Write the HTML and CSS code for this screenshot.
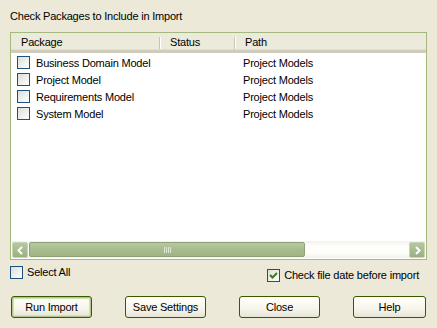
FILE: index.html
```html
<!DOCTYPE html>
<html lang="en">
<head>
    <meta charset="UTF-8">
    <title>Import Packages</title>
    <link rel="stylesheet" href="styles.css">
</head>
<body>
    <div class="dialog">
        <div class="title">Check Packages to Include in Import</div>
        <div class="listbox">
            <div class="list-header">
                <div class="col col-package">Package</div>
                <div class="col col-status">Status</div>
                <div class="col col-path">Path</div>
            </div>
            <div class="list-rows">
                <div class="row">
                    <div class="cell cell-package"><span class="check"></span>Business Domain Model</div>
                    <div class="cell cell-status"></div>
                    <div class="cell cell-path">Project Models</div>
                </div>
                <div class="row">
                    <div class="cell cell-package"><span class="check"></span>Project Model</div>
                    <div class="cell cell-status"></div>
                    <div class="cell cell-path">Project Models</div>
                </div>
                <div class="row">
                    <div class="cell cell-package"><span class="check"></span>Requirements Model</div>
                    <div class="cell cell-status"></div>
                    <div class="cell cell-path">Project Models</div>
                </div>
                <div class="row">
                    <div class="cell cell-package"><span class="check"></span>System Model</div>
                    <div class="cell cell-status"></div>
                    <div class="cell cell-path">Project Models</div>
                </div>
            </div>
            <div class="hscroll">
                <div class="scroll-btn">
                    <svg width="9" height="9" viewBox="0 0 9 9"><path d="M6 1 L2.5 4.5 L6 8" fill="none" stroke="#fff" stroke-width="2"/></svg>
                </div>
                <div class="scroll-thumb"><span class="grip"></span></div>
                <div class="scroll-track"></div>
                <div class="scroll-btn">
                    <svg width="9" height="9" viewBox="0 0 9 9"><path d="M3 1 L6.5 4.5 L3 8" fill="none" stroke="#fff" stroke-width="2"/></svg>
                </div>
            </div>
        </div>
        <div class="options">
            <label class="option"><span class="check"></span>Select All</label>
            <label class="option option-right"><span class="check checked">
                <svg width="9" height="9" viewBox="0 0 9 9"><path d="M1 4 L3.5 6.5 L8 2" fill="none" stroke="#3f7a18" stroke-width="2"/></svg>
            </span>Check file date before import</label>
        </div>
        <div class="buttons">
            <button class="btn btn-default">Run Import</button>
            <button class="btn">Save Settings</button>
            <button class="btn">Close</button>
            <button class="btn btn-help">Help</button>
        </div>
    </div>
</body>
</html>
```

FILE: styles.css
```css
body {
    margin: 0;
    background: #ece9d8;
    font-family: "Liberation Sans", Arial, sans-serif;
    font-size: 11px;
    letter-spacing: -0.2px;
    color: #000;
}
.dialog {
    width: 437px;
    height: 328px;
    box-sizing: border-box;
    padding: 10px 10px 0 10px;
    display: flex;
    flex-direction: column;
}
.title {
    height: 13px;
    line-height: 13px;
}
.listbox {
    margin-top: 9px;
    width: 417px;
    height: 228px;
    box-sizing: border-box;
    border: 1px solid #a4b97f;
    background: #fff;
    display: flex;
    flex-direction: column;
}
.list-header {
    display: grid;
    grid-template-columns: 149px 75px 1fr;
    height: 20px;
    box-sizing: border-box;
    background: #ebeadb;
    border-bottom: 3px solid #d0ccbc;
    box-shadow: inset 0 -1px 0 #e2ded0;
}
.col {
    line-height: 18px;
    padding-left: 10px;
    position: relative;
}
.col-package::after,
.col-status::after {
    content: "";
    position: absolute;
    right: 0;
    top: 4px;
    height: 12px;
    width: 1px;
    background: #c7c5b2;
    box-shadow: 1px 0 0 #fff;
}
.list-rows {
    flex: 1;
    padding-top: 1px;
}
.row {
    display: grid;
    grid-template-columns: 149px 75px 1fr;
    height: 17px;
    align-items: center;
}
.cell-package {
    display: flex;
    align-items: center;
    padding-left: 6px;
}
.cell-path {
    padding-left: 8px;
}
.check {
    width: 13px;
    height: 13px;
    box-sizing: border-box;
    border: 1px solid #1c5180;
    background: linear-gradient(135deg, #dcdcd7, #fff);
    margin-right: 6px;
    display: inline-flex;
    align-items: center;
    justify-content: center;
    flex: none;
}
.hscroll {
    height: 17px;
    margin: 0 1px 1px 1px;
    display: flex;
    background: linear-gradient(#f3f1e9, #fefefb 30%, #fefefb 70%, #f3f1e9);
}
.scroll-btn {
    width: 16px;
    height: 16px;
    margin-top: 1px;
    box-sizing: border-box;
    border: 1px solid #c8d4b6;
    border-radius: 2px;
    background: linear-gradient(#b6c7a0, #9bb07f);
    display: flex;
    align-items: center;
    justify-content: center;
}
.scroll-thumb {
    width: 276px;
    height: 15px;
    margin: 1px 0 0 1px;
    box-sizing: border-box;
    border: 1px solid #8fa275;
    border-radius: 2px;
    background: linear-gradient(#b7c8a2, #a8bc8d 50%, #9fb485);
    display: flex;
    align-items: center;
    justify-content: center;
}
.grip {
    width: 7px;
    height: 6px;
    background: repeating-linear-gradient(90deg, #dfe8d2 0 1px, transparent 1px 2px);
}
.scroll-track {
    flex: 1;
}
.options {
    display: flex;
    justify-content: space-between;
    align-items: flex-start;
    margin-top: 6px;
    height: 30px;
}
.option {
    display: flex;
    align-items: center;
    line-height: 13px;
}
.option .check {
    margin-right: 4px;
}
.option-right {
    margin-top: 3px;
    margin-right: 8px;
}
.buttons {
    display: flex;
    gap: 33px;
    padding-left: 1px;
}
.btn {
    width: 81px;
    height: 22px;
    box-sizing: border-box;
    border: 1px solid #375a00;
    border-radius: 3px;
    background: linear-gradient(#fffff9, #f6f5ec 60%, #e6e4d4);
    font-family: "Liberation Sans", Arial, sans-serif;
    font-size: 11px;
    letter-spacing: -0.2px;
    color: #000;
    padding: 0;
}
.btn-default {
    box-shadow: inset 0 0 0 1px #b2c78e, inset 0 0 0 2px #d2e0b8;
}
.btn-help {
    width: 73px;
}
```
